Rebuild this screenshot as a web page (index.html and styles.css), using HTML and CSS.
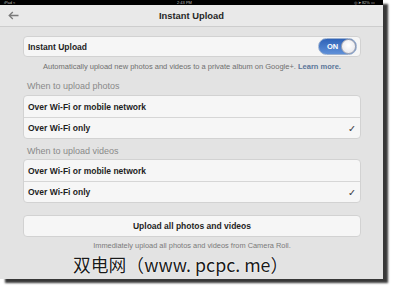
FILE: index.html
```html
<!DOCTYPE html>
<html>
<head>
<meta charset="utf-8">
<link rel="stylesheet" href="styles.css">
</head>
<body>
<div class="device">
  <div class="status">
    <span class="st-left">iPad &#8776;</span>
    <span class="st-mid">2:43 PM</span>
    <span class="st-right">&#9678; &#10148; 82% &#9645;</span>
  </div>
  <div class="nav">
    <svg class="back" width="11" height="9" viewBox="0 0 11 9"><path d="M10.5 4.5H1.2M4.8 1 1.2 4.5 4.8 8" fill="none" stroke="#7a7a7a" stroke-width="1.3"/></svg>
    <div class="title">Instant Upload</div>
  </div>
  <div class="content">
    <div class="card card-single">
      <div class="row row-toggle">
        <span>Instant Upload</span>
        <span class="toggle"><span class="on">ON</span><span class="knob"></span></span>
      </div>
    </div>
    <p class="desc">Automatically upload new photos and videos to a private album on Google+. <span class="link">Learn more.</span></p>
    <div class="label label-first">When to upload photos</div>
    <div class="card">
      <div class="row">Over Wi-Fi or mobile network</div>
      <div class="row">Over Wi-Fi only<span class="check">&#10003;</span></div>
    </div>
    <div class="label">When to upload videos</div>
    <div class="card">
      <div class="row">Over Wi-Fi or mobile network</div>
      <div class="row">Over Wi-Fi only<span class="check">&#10003;</span></div>
    </div>
    <div class="card button">Upload all photos and videos</div>
    <p class="caption">Immediately upload all photos and videos from Camera Roll.</p>
  </div>
  <div class="watermark">双电网（www. pcpc. me）</div>
</div>
</body>
</html>
```

FILE: styles.css
```css
html, body {
  margin: 0;
  padding: 0;
  background: #ffffff;
}
body {
  font-family: "Liberation Sans", Arial, sans-serif;
  width: 394px;
  height: 290px;
  overflow: hidden;
}
.device {
  position: relative;
  width: 383px;
  height: 279px;
  background: #e3e3e3;
  box-shadow: 5px 4px 2px rgba(0, 0, 0, 0.78);
  overflow: hidden;
}
.status {
  height: 5px;
  background: #000;
  color: #bdbdbd;
  font-size: 4px;
  line-height: 5px;
  display: flex;
  justify-content: space-between;
  overflow: hidden;
  padding: 0 8px 0 4px;
}
.nav {
  height: 21px;
  background: #e9e9e9;
  border-bottom: 1px solid #cdcdcd;
  display: flex;
  align-items: center;
  justify-content: center;
  position: relative;
}
.back {
  position: absolute;
  left: 8px;
  top: 6px;
}
.title {
  font-weight: bold;
  font-size: 9.4px;
  color: #262626;
}
.content {
  padding: 9px 22px 0 23px;
}
.card {
  background: #f6f6f6;
  border: 1px solid #d2d2d2;
  border-radius: 4px;
  box-sizing: border-box;
}
.row {
  height: 21px;
  display: flex;
  align-items: center;
  justify-content: space-between;
  padding: 0 4px 0 4px;
  font-size: 8.5px;
  font-weight: bold;
  color: #1e1e1e;
  box-sizing: border-box;
}
.row + .row {
  border-top: 1px solid #d6d6d6;
  height: 21px;
}
.card-single .row {
  height: 19px;
}
.row-toggle {
  padding-right: 3px;
}
.toggle {
  width: 39px;
  height: 17px;
  border-radius: 9px;
  background: linear-gradient(#2f63b8, #5f90d8);
  display: flex;
  align-items: center;
  justify-content: space-between;
  box-sizing: border-box;
  border: 1px solid #9ab0d0;
}
.on {
  color: #fff;
  font-size: 7.5px;
  font-weight: bold;
  padding-left: 8px;
}
.knob {
  width: 15px;
  height: 15px;
  border-radius: 50%;
  background: radial-gradient(circle at 50% 40%, #ffffff, #e2e2e8);
  border: 1px solid #a8a8b0;
  box-sizing: border-box;
}
.check {
  font-size: 9.5px;
  color: #3c3c46;
  font-weight: bold;
  font-family: "DejaVu Sans", sans-serif;
}
.desc {
  margin: 5px 0 0 0;
  font-size: 7.5px;
  line-height: 10px;
  color: #6f6f6f;
  text-align: center;
  white-space: nowrap;
}
.link {
  color: #5a7699;
  font-weight: bold;
}
.label {
  font-size: 9px;
  line-height: 10px;
  color: #8a8a8a;
  margin: 7px 0 3px 4px;
}
.label-first {
  margin-top: 9px;
  margin-bottom: 4px;
}
.button {
  margin-top: 12px;
  height: 22px;
  display: flex;
  align-items: center;
  justify-content: center;
  font-size: 8.5px;
  font-weight: bold;
  color: #1e1e1e;
}
.caption {
  margin: 4px 0 0 0;
  font-size: 7.4px;
  line-height: 10px;
  color: #7a7a7a;
  text-align: center;
}
.watermark {
  position: absolute;
  left: 73px;
  top: 253px;
  font-family: "Noto Sans CJK SC", sans-serif;
  font-size: 17.8px;
  line-height: 22px;
  color: #1a1a1a;
  white-space: nowrap;
  text-shadow: 0 0 1px #fff, 0 0 2px #fff;
}
```
